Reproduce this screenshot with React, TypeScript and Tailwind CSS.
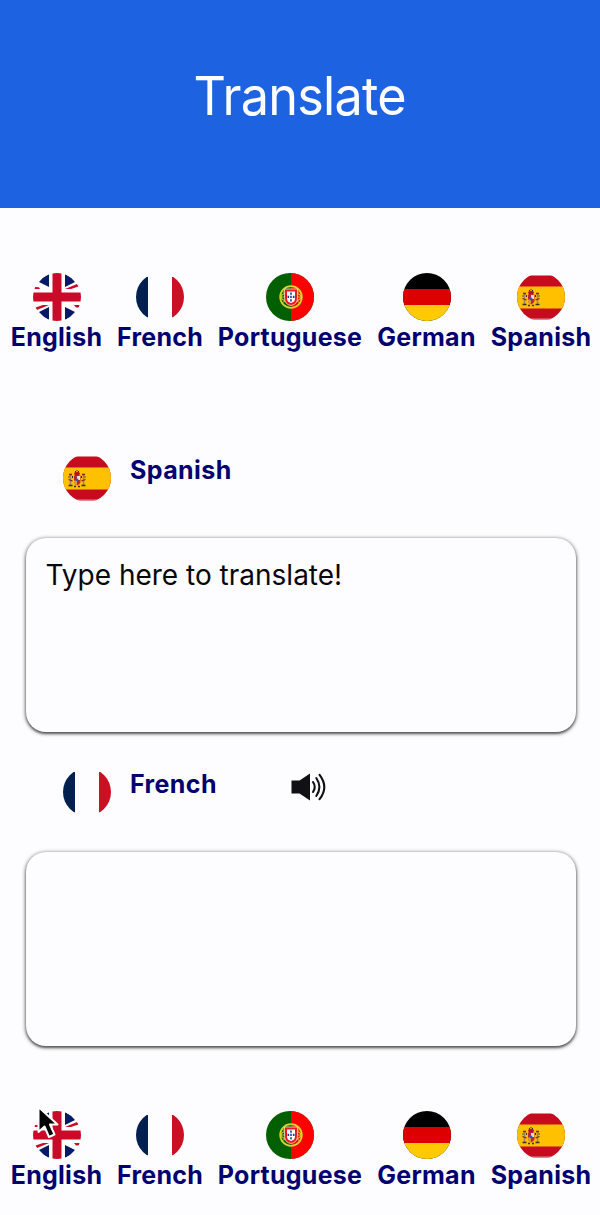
import React, { useId } from "react";

type Lang = "English" | "French" | "Portuguese" | "German" | "Spanish";

function FlagArt({ lang }: { lang: Lang }) {
  switch (lang) {
    case "English":
      return (
        <>
          <rect width="48" height="48" fill="#fdfcff" />
          <g fill="#061a66">
            <path d="M16 1V14L6 9Q10 4 16 1Z" />
            <path d="M32 1V14L42 9Q38 4 32 1Z" />
            <path d="M16 47V34L6 39Q10 44 16 47Z" />
            <path d="M32 47V34L42 39Q38 44 32 47Z" />
          </g>
          <g fill="#cb0a28">
            <path d="M2 14L6 14.2L7 16H1Z" />
            <path d="M32 16L44 11L45.500 13.500L38 16Z" />
            <path d="M16 32L4 37L2.500 34.500L10 32Z" />
            <path d="M41 32H47L46 34.500H43Z" />
            <path d="M19.500 0h9v19.500H48v9H28.500V48h-9V28.500H0v-9h19.500Z" />
          </g>
        </>
      );
    case "French":
      return (
        <>
          <rect y="4" width="12" height="40.500" fill="#00204f" />
          <rect x="36" y="4" width="12" height="40.500" fill="#cb1023" />
        </>
      );
    case "Portuguese":
      return (
        <>
          <rect width="48" height="48" fill="#006000" />
          <rect x="25" width="23" height="48" fill="#ff0000" />
          <circle cx="25" cy="24" r="10.800" fill="none" stroke="#d8d528" strokeWidth="1.800" />
          <ellipse cx="25" cy="24" rx="10" ry="4.500" fill="none" stroke="#d3cf30" strokeWidth="1.200" />
          <path d="M16 18L34 30M16 30L34 18M15 24H35" stroke="#c8c42c" strokeWidth="1" />
          <path d="M18.500 16H31.500V25Q31.500 31.500 25 32.500Q18.500 31.500 18.500 25Z" fill="#f01820" stroke="#f5e9c0" strokeWidth=".8" />
          <path d="M21 18.500H29V25.500Q29 29 25 30Q21 29 21 25.500Z" fill="#fff" />
          <path d="M24.200 19.500h1.600v2.200h-1.600zM21.500 22.800h1.600v2.200h-1.600zM24.200 22.800h1.600v2.200h-1.600zM26.900 22.800h1.600v2.200h-1.600zM24.200 26.200h1.600v2.200h-1.600z" fill="#183b9b" />
        </>
      );
    case "German":
      return (
        <>
          <rect width="48" height="48" fill="#000" />
          <rect y="16" width="48" height="16" fill="#dd0000" />
          <rect y="32" width="48" height="16" fill="#ffcb00" />
        </>
      );
    case "Spanish":
      return (
        <>
          <rect y="2.500" width="48" height="44" fill="#c60b1e" />
          <rect y="13.500" width="48" height="22" fill="#ffc000" />
          <rect y="45.500" width="48" height="1" fill="#d88c9a" />
          <path d="M11 19Q14 16.500 17 19L16 22H12Z" fill="#b41422" />
          <path d="M11 21.500H17.500V28Q17 30.500 14 31.500Q11.500 30.500 11 28Z" fill="#bd2630" />
          <path d="M14 22h3v4H14z" fill="#e9dce6" />
          <path d="M11 26.500H14V31Q11.500 30.500 11 28Z" fill="#e0a026" />
          <circle cx="14" cy="26" r="1.400" fill="#275ac4" />
          <path d="M7.500 21V31M20.500 21V31" stroke="#9b8373" strokeWidth="1.600" />
          <path d="M6 20.500h3M19 20.500h3M5.500 25.500l4 1.500M18.500 27l4-1.500" stroke="#8a1c20" strokeWidth="1.300" />
          <path d="M5.500 31.500h4M18.500 31.500h4M11 32.500h2M15 32.500h2M5.500 23h1M21.500 23h1" stroke="#3c321c" strokeWidth="1.300" />
          <path d="M12 17.500h1M15 17.500h1M13.500 16.500h1M9.500 22v2M18.500 22v2" stroke="#342415" strokeWidth="1" />
        </>
      );
  }
}

function Flag({ lang }: { lang: Lang }) {
  const id = useId();
  return (
    <svg viewBox="0 0 48 48" className="block size-12 shrink-0" aria-hidden="true">
      <defs>
        <clipPath id={id}>
          <circle cx="24" cy="24" r="24" />
        </clipPath>
      </defs>
      <g clipPath={`url(#${id})`}>
        <FlagArt lang={lang} />
      </g>
    </svg>
  );
}

const languages: Lang[] = ["English", "French", "Portuguese", "German", "Spanish"];

function LanguageRow() {
  return (
    <div className="grid grid-cols-[105px_102px_158px_115px_114px] pl-1">
      {languages.map((lang) => (
        <button key={lang} type="button" className="flex flex-col items-center">
          <Flag lang={lang} />
          <span className="text-[25px] leading-8 font-[650] tracking-[0.25px] whitespace-nowrap text-[#00006f]">{lang}</span>
        </button>
      ))}
    </div>
  );
}

function Selected({ lang, children }: { lang: Lang; children?: React.ReactNode }) {
  return (
    <div className="flex h-12 items-start pl-[63px]">
      <Flag lang={lang} />
      <span className="ml-[19px] w-[161px] text-[25px] leading-8 font-[650] tracking-[0.4px] text-[#00006f]">{lang}</span>
      {children}
    </div>
  );
}

function Speaker() {
  return (
    <svg viewBox="0 0 36 28" className="mt-[5px] block h-7 w-9" aria-label="Listen">
      <path d="M.5 7.500H8.500L19 .5V27.500L8.500 20.500H.5Z" fill="#111115" />
      <g fill="none" stroke="#111115" strokeWidth="2.100" strokeLinecap="round">
        <path d="M22 9Q25.500 14 22 19" />
        <path d="M25.300 5Q31.500 14 25.300 23" />
        <path d="M28.600 1.800Q38 14 28.600 26.200" />
      </g>
    </svg>
  );
}

function Panel({ children }: { children?: React.ReactNode }) {
  return (
    <div className="ml-[26px] h-[194px] w-[549.5px] rounded-[20px] bg-[#fdfcff] pt-[19px] pl-[19.5px] text-[28px] leading-9 text-[#08080b] shadow-[0_1px_4px_rgba(0,0,0,0.75),0_2px_2px_rgba(0,0,0,0.3)]">
      {children}
    </div>
  );
}

export default function App() {
  return (
    <div className="relative flex h-[1215px] w-[600px] flex-col overflow-hidden bg-[#fdfcff] font-['Inter',sans-serif]">
      <header className="flex h-52 shrink-0 justify-center bg-[#1d62e0] pt-[61px]">
        <h1 className="scale-x-[0.95] text-[53px] leading-[70px] font-normal tracking-[-0.8px] text-[#fdfcff]">Translate</h1>
      </header>
      <div className="pt-[65px]">
        <LanguageRow />
      </div>
      <div className="pt-[101px]">
        <Selected lang="Spanish" />
      </div>
      <div className="pt-9">
        <Panel>Type here to translate!</Panel>
      </div>
      <div className="pt-9">
        <Selected lang="French">
          <Speaker />
        </Selected>
      </div>
      <div className="pt-9">
        <Panel />
      </div>
      <div className="pt-[65px]">
        <LanguageRow />
      </div>
      <svg viewBox="0 0 24 36" className="absolute top-[1105px] left-9 h-9 w-6" aria-hidden="true">
        <path d="M2.500 2V27L8.500 21.500L13 32L18.500 29.500L14 19.500H21.500Z" fill="#000" stroke="#fff" strokeWidth="2" strokeLinejoin="round" />
      </svg>
    </div>
  );
}
